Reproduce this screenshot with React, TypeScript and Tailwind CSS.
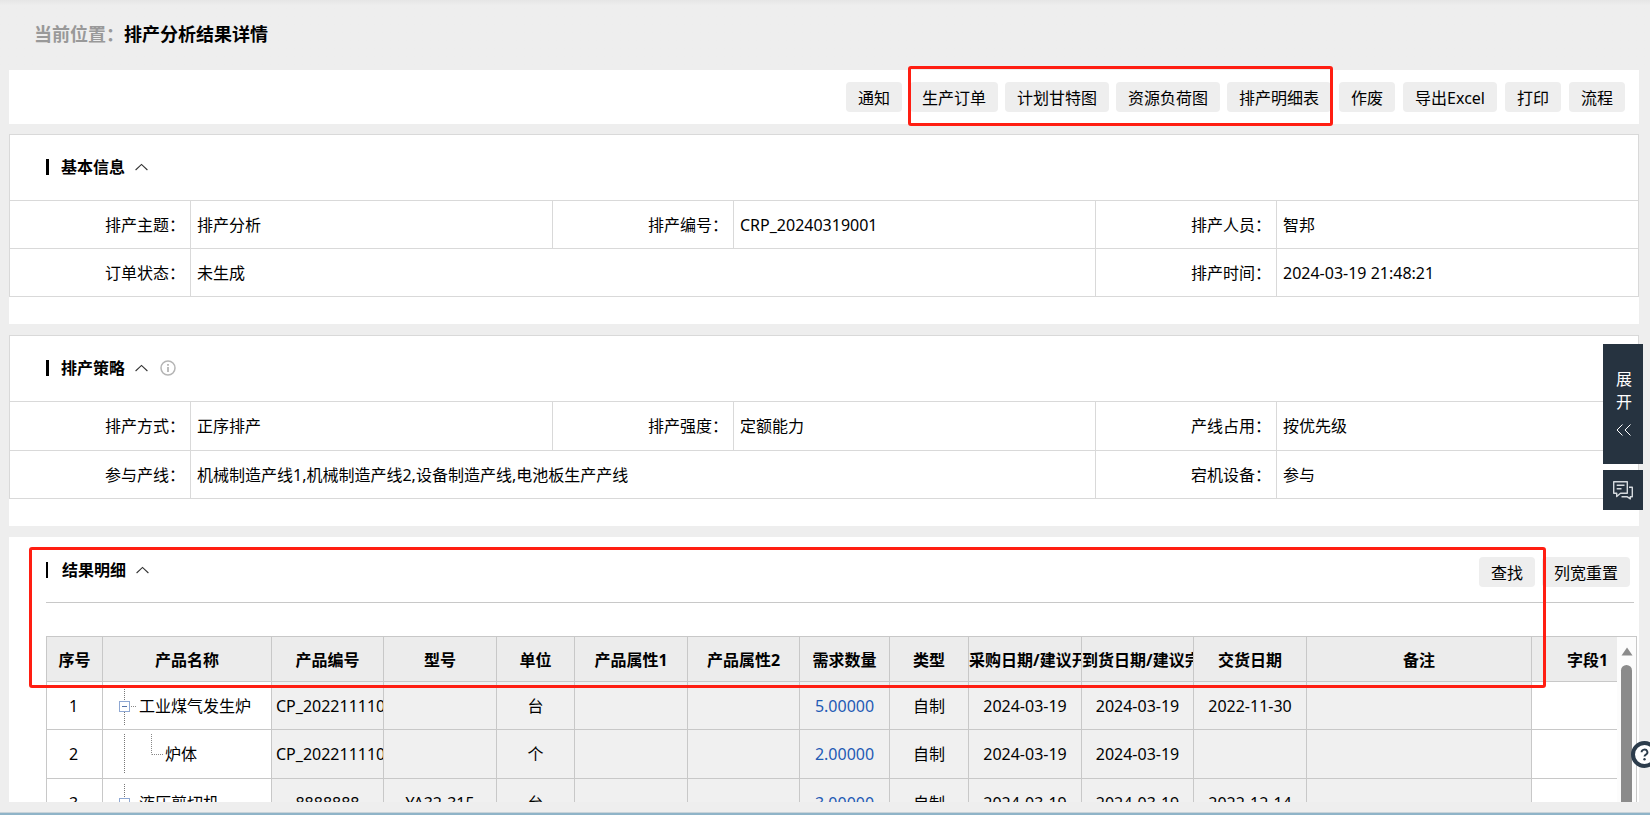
import type { ReactNode } from "react";

const FONT = "font-['Noto_Sans','Noto_Sans_CJK_SC',sans-serif]";

function ToolButton({ children }: { children: ReactNode }) {
  return (
    <button type="button" className="h-[30px] rounded bg-[#eeeeee] px-3 text-base leading-[32px] whitespace-nowrap">
      {children}
    </button>
  );
}

function Highlight({ className }: { className: string }) {
  return <div aria-hidden="true" className={`pointer-events-none absolute z-10 rounded-[3px] border-3 border-[#ff1e12] ${className}`} />;
}

function InfoIcon() {
  return (
    <svg width="16" height="16" viewBox="0 0 16 16" fill="none" stroke="#b5b5b5" aria-hidden="true">
      <circle cx="8" cy="8" r="7" strokeWidth="1.5" />
      <path d="M8 7v5" strokeWidth="1.8" />
      <path d="M8 4v1.8" strokeWidth="1.8" />
    </svg>
  );
}

function SectionTitle({ title, thin, info }: { title: string; thin?: boolean; info?: boolean }) {
  return (
    <div className="flex items-center">
      <span className={thin ? "mr-3.5 h-4 w-0.5 bg-black" : "mr-3 h-4 w-[3px] bg-black"} />
      <h2 className="text-base leading-6 font-bold">{title}</h2>
      <button type="button" aria-label="收起" className="ml-2.5">
        <svg width="13" height="8" viewBox="0 0 13 8" fill="none" stroke="#333" strokeWidth="1.1">
          <path d="M0.6 7 6.5 1.4 12.4 7" />
        </svg>
      </button>
      {info && (
        <span className="ml-3">
          <InfoIcon />
        </span>
      )}
    </div>
  );
}

type Field = { label: string; value: string; span?: number };

function InfoCard({ title, info, rows }: { title: string; info?: boolean; rows: Field[][] }) {
  return (
    <section className="shrink-0 bg-white pb-[27px]">
      <div className="flex h-[66px] items-center border border-b-0 border-[#d9d9d9] pb-px pl-9">
        <SectionTitle title={title} info={info} />
      </div>
      <table className="w-full table-fixed border-collapse">
        <colgroup>
          <col className="w-[181px]" />
          <col />
          <col className="w-[181px]" />
          <col />
          <col className="w-[181px]" />
          <col />
        </colgroup>
        <tbody>
          {rows.map((row, i) => (
            <tr key={i} className={info && i === 0 ? "h-[49px]" : "h-12"}>
              {row.map((f) => (
                <FieldCells key={f.label} field={f} />
              ))}
            </tr>
          ))}
        </tbody>
      </table>
    </section>
  );
}

function FieldCells({ field }: { field: Field }) {
  return (
    <>
      <th scope="row" className="border border-[#d9d9d9] pr-[5px] text-right text-base leading-6 font-normal">
        {field.label}：
      </th>
      <td colSpan={field.span ?? 1} className="border border-[#d9d9d9] pl-1.5 text-base leading-6">
        {field.value}
      </td>
    </>
  );
}

const basicRows: Field[][] = [
  [
    { label: "排产主题", value: "排产分析" },
    { label: "排产编号", value: "CRP_20240319001" },
    { label: "排产人员", value: "智邦" },
  ],
  [
    { label: "订单状态", value: "未生成", span: 3 },
    { label: "排产时间", value: "2024-03-19 21:48:21" },
  ],
];

const strategyRows: Field[][] = [
  [
    { label: "排产方式", value: "正序排产" },
    { label: "排产强度", value: "定额能力" },
    { label: "产线占用", value: "按优先级" },
  ],
  [
    { label: "参与产线", value: "机械制造产线1,机械制造产线2,设备制造产线,电池板生产产线", span: 3 },
    { label: "宕机设备", value: "参与" },
  ],
];

const columns: { name: string; width: string }[] = [
  { name: "序号", width: "w-14" },
  { name: "产品名称", width: "w-[169px]" },
  { name: "产品编号", width: "w-28" },
  { name: "型号", width: "w-[113px]" },
  { name: "单位", width: "w-[78px]" },
  { name: "产品属性1", width: "w-[113px]" },
  { name: "产品属性2", width: "w-28" },
  { name: "需求数量", width: "w-[90px]" },
  { name: "类型", width: "w-[79px]" },
  { name: "采购日期/建议开", width: "w-[113px]" },
  { name: "到货日期/建议完", width: "w-28" },
  { name: "交货日期", width: "w-[113px]" },
  { name: "备注", width: "w-[225px]" },
  { name: "字段1", width: "w-28" },
];

type Item = {
  no: number;
  name: string;
  child?: boolean;
  code: string;
  model: string;
  unit: string;
  qty: string;
  start: string;
  arrive: string;
  due: string;
};

const items: Item[] = [
  { no: 1, name: "工业煤气发生炉", code: "CP_202211110", model: "", unit: "台", qty: "5.00000", start: "2024-03-19", arrive: "2024-03-19", due: "2022-11-30" },
  { no: 2, name: "炉体", child: true, code: "CP_202211110", model: "", unit: "个", qty: "2.00000", start: "2024-03-19", arrive: "2024-03-19", due: "" },
  { no: 3, name: "液压剪切机", code: "8888888", model: "YA32-315", unit: "台", qty: "3.00000", start: "2024-03-19", arrive: "2024-03-19", due: "2022-12-14" },
];

function ParentBranch() {
  return (
    <svg width="20" height="40" viewBox="0 0 20 40" className="shrink-0" aria-hidden="true">
      <path d="M5.500 1v13M5.500 26v13" stroke="#777" strokeDasharray="1 1" />
      <path d="M12 20.500h6" stroke="#888" strokeDasharray="1 1" />
      <rect x="0.500" y="15.500" width="10" height="10" fill="#fff" stroke="#8fa8d3" />
      <path d="M3 20.500h5" stroke="#5573a8" />
    </svg>
  );
}

function ChildBranch() {
  return (
    <svg width="46" height="40" viewBox="0 0 46 40" className="shrink-0" aria-hidden="true">
      <path d="M5.500 0v40" stroke="#777" strokeDasharray="1 1" />
      <path d="M32.500 0v20.500M33 20.500h12" fill="none" stroke="#888" strokeDasharray="1 1" />
    </svg>
  );
}

function ResultTable() {
  const cell = "overflow-hidden border border-[#c8c8c8] bg-[#f0f0f0] text-center whitespace-nowrap";
  return (
    <table className="w-[1597px] table-fixed border-collapse text-base leading-6">
      <colgroup>
        {columns.map((c) => (
          <col key={c.name} className={c.width} />
        ))}
      </colgroup>
      <thead>
        <tr className="h-[45px]">
          {columns.map((c) => (
            <th key={c.name} scope="col" className="overflow-hidden border border-[#c8c8c8] bg-[#ececec] pt-0.5 font-bold whitespace-nowrap">
              {c.name}
            </th>
          ))}
        </tr>
      </thead>
      <tbody>
        {items.map((r) => (
          <tr key={r.no} className={r.no === 1 ? "h-12" : "h-[49px]"}>
            <td className="border border-[#c8c8c8] pr-0.5 text-center">{r.no}</td>
            <td className="border border-[#c8c8c8] pl-4">
              <div className="flex items-center">
                {r.child ? <ChildBranch /> : <ParentBranch />}
                {r.name}
              </div>
            </td>
            <td className={`${cell} px-1`}>{r.code}</td>
            <td className={cell}>{r.model}</td>
            <td className={cell}>{r.unit}</td>
            <td className={cell} />
            <td className={cell} />
            <td className={`${cell} text-[#1f5bb5]`}>{r.qty}</td>
            <td className={cell}>自制</td>
            <td className={cell}>{r.start}</td>
            <td className={cell}>{r.arrive}</td>
            <td className={cell}>{r.due}</td>
            <td className={cell} />
            <td className="border border-[#c8c8c8]" />
          </tr>
        ))}
      </tbody>
    </table>
  );
}

export default function App() {
  return (
    <div className={`relative flex h-screen flex-col overflow-hidden bg-[#eeeeee] text-base text-black ${FONT}`}>
      <header className="flex h-[70px] shrink-0 items-center bg-linear-to-b from-[#e6e6e6] to-[#eeeeee] to-8% pb-0.5 pl-[34px] text-lg leading-6 font-bold">
        <span className="text-[#999999]">当前位置：</span>
        <h1>排产分析结果详情</h1>
      </header>

      <main className="flex min-h-0 flex-1 flex-col pr-[11px] pl-[9px]">
        <div className="flex h-[54px] shrink-0 items-center justify-end gap-2 bg-white pr-3.5">
          <ToolButton>通知</ToolButton>
          <div className="relative flex gap-[7px]">
            <ToolButton>生产订单</ToolButton>
            <ToolButton>计划甘特图</ToolButton>
            <ToolButton>资源负荷图</ToolButton>
            <ToolButton>排产明细表</ToolButton>
            <Highlight className="-inset-x-0.5 -top-4 -bottom-3.5" />
          </div>
          <ToolButton>作废</ToolButton>
          <ToolButton>导出Excel</ToolButton>
          <ToolButton>打印</ToolButton>
          <ToolButton>流程</ToolButton>
        </div>

        <div className="mt-2.5 flex min-h-0 flex-1 flex-col gap-[11px]">
          <InfoCard title="基本信息" rows={basicRows} />
          <InfoCard title="排产策略" info rows={strategyRows} />

          <section className="relative flex min-h-0 flex-1 flex-col bg-white pr-0.5 pl-[37px]">
            <div className="mr-[3px] flex h-[66px] shrink-0 items-center justify-between border-b border-[#c8c8c8] pr-1">
              <SectionTitle title="结果明细" thin />
              <div className="flex gap-[7px] pt-1">
                <ToolButton>查找</ToolButton>
                <ToolButton>列宽重置</ToolButton>
              </div>
            </div>
            <div className="mt-[33px] flex min-h-0 flex-1 border-t border-r border-[#c8c8c8]">
              <div className="-mt-px min-w-0 flex-1 overflow-hidden">
                <ResultTable />
              </div>
              <div className="flex w-[19px] shrink-0 flex-col items-center bg-[#fcfcfc] pt-2.5" aria-hidden="true">
                <svg width="12" height="9" viewBox="0 0 12 9" fill="#8b8b8b">
                  <path d="M6 0.500 11.500 8.500H0.500z" />
                </svg>
                <div className="mt-[9px] w-[11px] flex-1 rounded-t-full bg-[#8b8b8b]" />
              </div>
            </div>
            <Highlight className="top-2.5 right-[93px] left-5 h-[141px]" />
          </section>
        </div>
      </main>

      <div className="mt-2.5 h-[3px] shrink-0 border-t border-[#c9d3d9] bg-[#8fb4c8]" />

      <aside className="absolute top-[344px] right-[7px] z-20 flex w-10 flex-col gap-1.5">
        <button type="button" className="flex h-[120px] flex-col items-center bg-[#263340] pt-6 pl-0.5 text-base leading-[23px] text-white">
          <span>展</span>
          <span>开</span>
          <svg width="16" height="12" viewBox="0 0 16 12" fill="none" stroke="#fff" className="mt-[10px]">
            <path d="M6.500 0.500 1 6l5.500 5.500M14.500 0.500 9 6l5.500 5.500" />
          </svg>
        </button>
        <button type="button" aria-label="消息" className="flex h-10 items-center justify-center bg-[#263340]">
          <svg width="22" height="20" viewBox="0 0 22 20" fill="none" stroke="#d5dade" strokeWidth="1.4" strokeLinejoin="round">
            <path d="M1.700 1.700h13.600v11.600H8.500L4.700 16.500v-3.200h-3z" />
            <path d="M4.700 5.300h7.800M4.700 8.800h4.800" />
            <path d="M17 7.300h3.300v9.400h-2v2.200l-3.300-2.200H9.500" />
          </svg>
        </button>
      </aside>

      <button type="button" aria-label="帮助" className="absolute top-[741px] -right-2 z-20">
        <svg width="27" height="27" viewBox="0 0 27 27" fill="none">
          <circle cx="13.500" cy="13.500" r="11.500" fill="#fff" stroke="#2c3c4b" strokeWidth="4" />
          <path d="M10.600 11.300a2.900 2.700 0 1 1 4.300 2.300c-1 .6-1.400 1-1.400 2" stroke="#2c3c4b" strokeWidth="1.900" />
          <circle cx="13.500" cy="18.200" r="1.200" fill="#2c3c4b" />
        </svg>
      </button>
    </div>
  );
}
